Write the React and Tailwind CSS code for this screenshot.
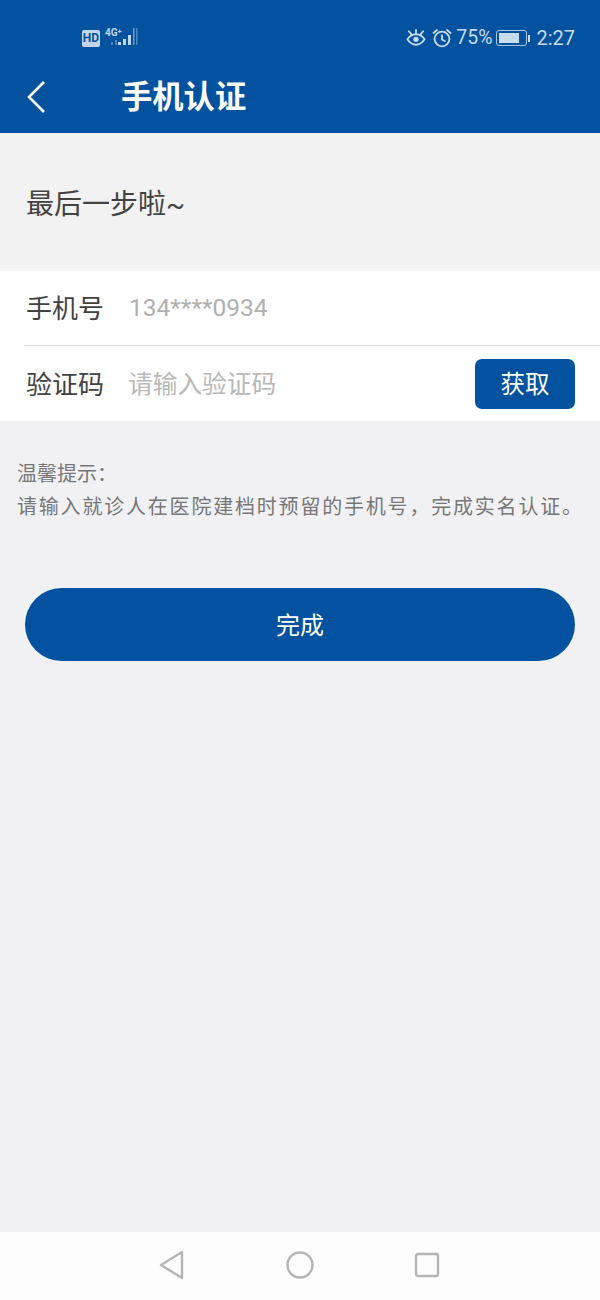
const CJK = "font-['Roboto','Noto_Sans_CJK_SC',sans-serif]";

function Signal() {
  return (
    <div className="relative w-[38px] h-[22px] ml-[4px]">
      <span className="absolute left-[1px] top-0 text-[10px] leading-[11px] font-bold text-[#c3d5e8]">4G⁺</span>
      <svg width="38" height="22" viewBox="0 0 38 22" className="absolute left-0 top-0">
        <rect x="7" y="15" width="2" height="3" fill="#4f86bb" />
        <rect x="11" y="13" width="2" height="5" fill="#4f86bb" />
        <rect x="14" y="15" width="3" height="3" fill="#c3d5e8" />
        <rect x="19" y="12" width="3" height="6" fill="#c3d5e8" />
        <rect x="24" y="8" width="3" height="10" fill="#c3d5e8" />
        <rect x="29" y="1" width="1.5" height="17" fill="#6f9cc8" />
        <rect x="32" y="1" width="1.5" height="17" fill="#4f86bb" />
      </svg>
    </div>
  );
}

function Eye() {
  return (
    <svg width="20" height="18" viewBox="0 0 22 20" fill="none" stroke="#c9dbec" strokeWidth="2">
      <path d="M1.5 11.5C4 7.5 7 6 11 6s7 1.5 9.5 5.5C18 15.5 15 17.5 11 17.5S4 15.5 1.5 11.5Z" />
      <circle cx="11" cy="11.5" r="3" fill="#c9dbec" stroke="none" />
      <path d="M3 2.5 6 6M19 2.5 16 6M11 1v4" strokeLinecap="round" />
    </svg>
  );
}

function Alarm() {
  return (
    <svg width="20" height="20" viewBox="0 0 20 20" fill="none" stroke="#c9dbec" strokeWidth="1.8">
      <circle cx="10" cy="11" r="7.4" />
      <path d="M10 6.5V11.5L13.5 13.5" />
      <path d="M1.5 5 5 2M18.5 5 15 2" strokeLinecap="round" />
    </svg>
  );
}

function Battery() {
  return (
    <div className="flex items-center ml-[4px] mr-[6px]">
      <div className="w-[31px] h-[16px] border border-[#a9c4de] rounded-[3px] p-[2px]">
        <div className="w-[20px] h-full bg-[#c9dbec]" />
      </div>
      <div className="w-[2px] h-[7px] ml-[1px] bg-[#c9dbec]" />
    </div>
  );
}

function Row({ label, children, border }) {
  return (
    <div className={`flex items-center h-[75px] ml-[24px] ${border ? "border-b border-[#d6d6d6]" : ""}`}>
      <span className="w-[105px] pl-[2px] pt-[2px] text-[26px] leading-[36px] text-[#424242]">{label}</span>
      {children}
    </div>
  );
}

export default function App() {
  return (
    <div className={`w-[600px] h-[1300px] flex flex-col bg-[#f1f1f4] ${CJK}`}>
      <header className="h-[133px] bg-[#02529f] shrink-0">
        <div className="h-[66px] flex items-center justify-between pl-[82px] pr-[25px] pt-[10px]">
          <div className="flex items-center">
            <span className="w-[18px] h-[17px] rounded-[2px] bg-[#c3d5e8] text-[#02529f] text-[12px] leading-[17px] font-bold text-center">HD</span>
            <Signal />
          </div>
          <div className="flex items-center text-[20px] leading-[24px] text-[#c9dbec]">
            <Eye />
            <span className="ml-[6px] flex"><Alarm /></span>
            <span className="ml-[4px] text-[19.5px]">75%</span>
            <Battery />
            <span>2:27</span>
          </div>
        </div>
        <div className="h-[67px] flex items-center pb-[6px]">
          <svg width="20" height="34" viewBox="0 0 20 34" fill="none" stroke="#fff" strokeWidth="2.6" className="ml-[26px]">
            <path d="M18 2 3 17l15 15" />
          </svg>
          <h1 className="ml-[75px] pt-[3px] text-[31.3px] leading-[40px] font-bold text-white">手机认证</h1>
        </div>
      </header>

      <p className="h-[138px] flex items-center pl-[26px] pt-[6px] text-[28px] text-[#424242] bg-[#f3f2f2]">最后一步啦~</p>

      <section className="bg-white">
        <Row label="手机号" border>
          <span className="text-[24.5px] text-[#b0b0b0]">134****0934</span>
        </Row>
        <Row label="验证码">
          <span className="pt-[3px] -ml-[1px] text-[24.7px] text-[#b8b8b8]">请输入验证码</span>
          <button className="ml-auto mr-[25px] w-[100px] h-[50px] pt-[3px] rounded-[7px] bg-[#02529f] text-white text-[24.5px]">获取</button>
        </Row>
      </section>

      <div className="mt-[37px] pl-[17px] text-[20px] leading-[33px] text-[#777777]">
        <p>温馨提示：</p>
        <p className="tracking-[1.8px] whitespace-nowrap">请输入就诊人在医院建档时预留的手机号，完成实名认证。</p>
      </div>

      <button className="mt-[64px] mx-[25px] h-[73px] pt-[3px] rounded-full bg-[#02529f] text-white text-[24px]">完成</button>

      <nav className="mt-auto h-[68px] bg-[#fdfdfd] flex items-center pb-[2px] pl-[159px]">
        <svg width="26" height="30" viewBox="0 0 26 30" fill="none" stroke="#b5b5b5" strokeWidth="2.4" strokeLinejoin="round">
          <path d="M23 2 2 15l21 13Z" />
        </svg>
        <svg width="28" height="28" viewBox="0 0 28 28" fill="none" stroke="#b5b5b5" strokeWidth="2.4" className="ml-[101px]">
          <circle cx="14" cy="14" r="12.5" />
        </svg>
        <svg width="26" height="26" viewBox="0 0 26 26" fill="none" stroke="#b5b5b5" strokeWidth="2.4" className="ml-[100px]">
          <rect x="2" y="2" width="22" height="22" rx="2" />
        </svg>
      </nav>
    </div>
  );
}
